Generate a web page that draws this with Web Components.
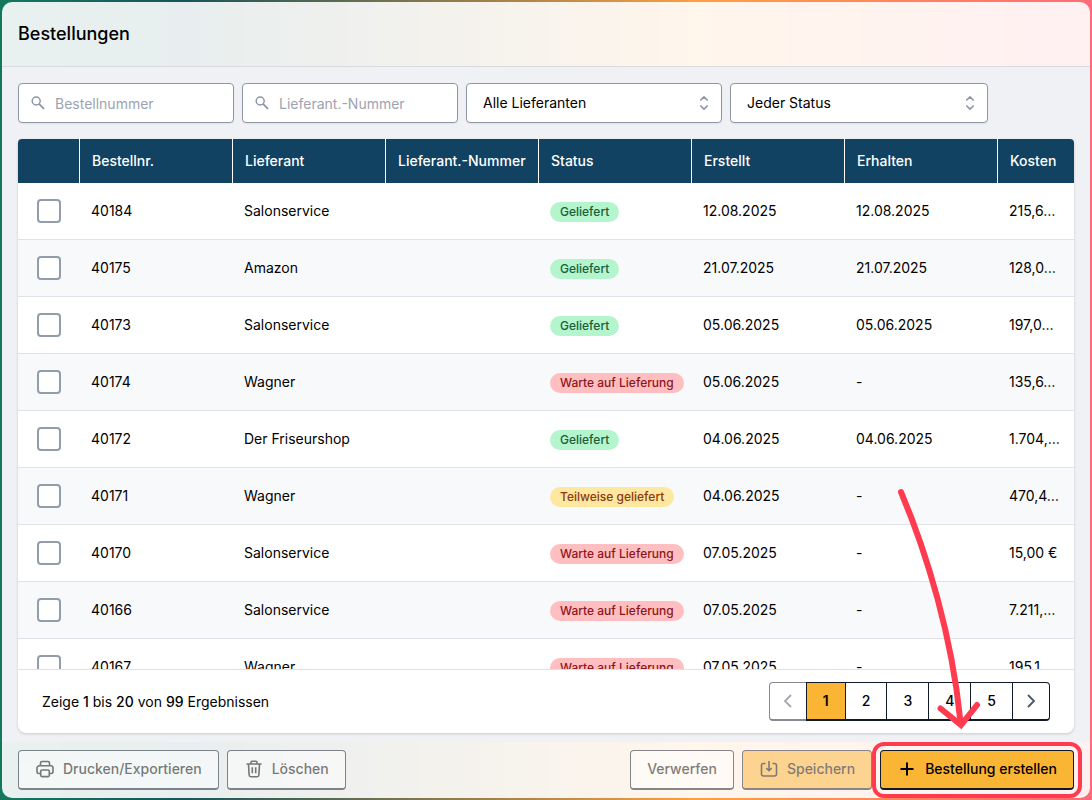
<!DOCTYPE html>
<html lang="de">
<head>
<meta charset="utf-8">
<meta name="viewport" content="width=device-width, initial-scale=1">
<title>Bestellungen</title>
<style>
  body {
    margin: 0;
    font-family: Inter, "Liberation Sans", sans-serif;
    font-size: 14px;
    line-height: 20px;
    color: #000;
    background: linear-gradient(to right, #14785f 0%, #17555a 17%, #ff9f40 64%, #ff6b78 100%);
  }
</style>
</head>
<body>
<app-shell>
  <h1 slot="title">Bestellungen</h1>
  <search-field slot="filters" label="Bestellnummer"></search-field>
  <search-field slot="filters" label="Lieferant.-Nummer"></search-field>
  <select-field slot="filters" label="Lieferant" options="Alle Lieferanten|Amazon|Der Friseurshop|Salonservice|Wagner"></select-field>
  <select-field slot="filters" label="Status" wide options="Jeder Status|Geliefert|Teilweise geliefert|Warte auf Lieferung"></select-field>
  <orders-table></orders-table>
  <result-pagination></result-pagination>
  <app-button slot="left" icon="print" disabled>Drucken/Exportieren</app-button>
  <app-button slot="left" icon="trash" disabled>Löschen</app-button>
  <app-button slot="right" disabled>Verwerfen</app-button>
  <app-button slot="right" icon="save" primary disabled>Speichern</app-button>
  <tour-highlight slot="right">
    <app-button icon="plus" primary>Bestellung erstellen</app-button>
  </tour-highlight>
</app-shell>

<script>
const ICONS = {
  print: '<path d="M5.500 6.500V4a1.500 1.500 0 0 1 1.500-1.500h6A1.500 1.500 0 0 1 14.500 4v2.500M5.500 14.500H4a2 2 0 0 1-2-2V9a2.200 2.200 0 0 1 2.200-2.200h11.600A2.200 2.200 0 0 1 18 9v3.500a2 2 0 0 1-2 2h-1.500M7 11h6a1.300 1.300 0 0 1 1.300 1.300v4A1.300 1.300 0 0 1 13 17.600H7a1.300 1.300 0 0 1-1.300-1.300v-4A1.300 1.300 0 0 1 7 11z"/>',
  trash: '<path d="M2.500 5h15M7 5V3.200a1 1 0 0 1 1-1h4a1 1 0 0 1 1 1V5M4.500 5l.6 11a1.800 1.800 0 0 0 1.800 1.700h6.200a1.800 1.800 0 0 0 1.800-1.700l.6-11M8.300 8.300v6M11.700 8.300v6"/>',
  save: '<path d="M6.500 4.500h-2a2 2 0 0 0-2 2v8.500a2 2 0 0 0 2 2h11a2 2 0 0 0 2-2V6.500a2 2 0 0 0-2-2h-2M10 2v9.500M7.200 9l2.800 2.800L12.800 9"/>',
  plus: '<path d="M10 3.500v13M3.500 10h13" stroke-width="2"/>'
};

class AppShell extends HTMLElement {
  constructor() {
    super();
    this.attachShadow({ mode: 'open' });
    this.shadowRoot.innerHTML = `
      <style>
        :host {
          display: flex;
          box-sizing: border-box;
          height: 100vh;
          padding: 2px;
        }
        .panel {
          flex: 1;
          min-width: 0;
          display: flex;
          flex-direction: column;
          border-radius: 10px;
          overflow: hidden;
        }
        header {
          padding: 20px 16px;
          background: rgba(255, 255, 255, 0.9);
          border-bottom: 1px solid #d8dadd;
        }
        ::slotted(h1) {
          margin: 0;
          font-size: 18px;
          line-height: 24px;
          font-weight: 500;
        }
        main {
          flex: 1;
          min-height: 0;
          display: flex;
          flex-direction: column;
          gap: 16px;
          padding: 16px 16px 9px;
          background: #f0f1f4;
        }
        .filters {
          display: flex;
          gap: 8px;
        }
        .card {
          flex: 1;
          min-height: 0;
          display: flex;
          flex-direction: column;
          background: #fff;
          border-radius: 4px 4px 8px 8px;
          overflow: hidden;
          box-shadow: 0 1px 3px rgba(0, 0, 0, 0.16);
        }
        footer {
          display: flex;
          justify-content: space-between;
          padding: 8px 16px;
          background: rgba(255, 255, 255, 0.9);
        }
        .group {
          display: flex;
          gap: 8px;
        }
      </style>
      <div class="panel">
        <header><slot name="title"></slot></header>
        <main>
          <div class="filters"><slot name="filters"></slot></div>
          <div class="card"><slot></slot></div>
        </main>
        <footer>
          <div class="group"><slot name="left"></slot></div>
          <div class="group"><slot name="right"></slot></div>
        </footer>
      </div>
    `;
  }
}

class SearchField extends HTMLElement {
  connectedCallback() {
    const label = this.getAttribute('label');
    this.attachShadow({ mode: 'open' });
    this.shadowRoot.innerHTML = `
      <style>
        :host {
          display: block;
          width: 216px;
        }
        label {
          display: flex;
          align-items: center;
          box-sizing: border-box;
          height: 40px;
          padding: 0 12px;
          gap: 8px;
          background: #fff;
          border: 1px solid #8d97a5;
          border-radius: 4px;
          box-shadow: 0 1px 2px rgba(0, 0, 0, 0.06);
        }
        svg {
          flex: none;
          color: #8d97a5;
        }
        input {
          flex: 1;
          min-width: 0;
          padding: 2px 0 0;
          border: 0;
          outline: 0;
          background: none;
          font: inherit;
        }
        input::placeholder {
          color: #9ca3af;
          opacity: 1;
        }
      </style>
      <label>
        <svg width="16" height="16" viewBox="0 0 16 16" fill="none" stroke="currentColor">
          <circle cx="5.200" cy="6" r="4" stroke-width="1.500"/>
          <path d="M8 8.800l5 5" stroke-width="1.900"/>
        </svg>
        <input type="text" placeholder="${label}" aria-label="${label}">
      </label>
    `;
  }
}

class SelectField extends HTMLElement {
  connectedCallback() {
    const options = this.getAttribute('options').split('|');
    this.attachShadow({ mode: 'open' });
    this.shadowRoot.innerHTML = `
      <style>
        :host {
          display: grid;
          width: 256px;
        }
        :host([wide]) {
          width: 258px;
        }
        select, svg {
          grid-area: 1 / 1;
        }
        select {
          appearance: none;
          height: 40px;
          padding: 0 40px 0 16px;
          background: #fff;
          border: 1px solid #8d97a5;
          border-radius: 4px;
          box-shadow: 0 1px 2px rgba(0, 0, 0, 0.06);
          font: inherit;
          color: inherit;
        }
        svg {
          place-self: center end;
          margin-right: 8px;
          color: #8d97a5;
          pointer-events: none;
        }
      </style>
      <select aria-label="${this.getAttribute('label')}">
        ${options.map(o => `<option>${o}</option>`).join('')}
      </select>
      <svg width="20" height="20" viewBox="0 0 20 20" fill="none" stroke="currentColor" stroke-width="1.700" stroke-linecap="round" stroke-linejoin="round">
        <path d="M6.800 7L10 3.900 13.200 7M6.800 13l3.200 3.100L13.200 13"/>
      </svg>
    `;
  }
}

class StatusBadge extends HTMLElement {
  constructor() {
    super();
    this.attachShadow({ mode: 'open' });
    this.shadowRoot.innerHTML = `
      <style>
        :host {
          display: inline-block;
          margin-top: 2px;
          padding: 2px 10px;
          border-radius: 10px;
          font-size: 12px;
          line-height: 16px;
          font-weight: 500;
          white-space: nowrap;
          vertical-align: middle;
          background: #b5f5cd;
          color: #17603a;
        }
        :host([type="open"]) {
          background: #ffbfc0;
          color: #8f1420;
        }
        :host([type="partial"]) {
          background: #fee79f;
          color: #8a3a10;
        }
      </style>
      <slot></slot>
    `;
  }
}

const STATUS = {
  done: 'Geliefert',
  open: 'Warte auf Lieferung',
  partial: 'Teilweise geliefert'
};

const ORDERS = [
  ['40184', 'Salonservice', '', 'done', '12.08.2025', '12.08.2025', '215,6…'],
  ['40175', 'Amazon', '', 'done', '21.07.2025', '21.07.2025', '128,0…'],
  ['40173', 'Salonservice', '', 'done', '05.06.2025', '05.06.2025', '197,0…'],
  ['40174', 'Wagner', '', 'open', '05.06.2025', '-', '135,6…'],
  ['40172', 'Der Friseurshop', '', 'done', '04.06.2025', '04.06.2025', '1.704,…'],
  ['40171', 'Wagner', '', 'partial', '04.06.2025', '-', '470,4…'],
  ['40170', 'Salonservice', '', 'open', '07.05.2025', '-', '15,00 €'],
  ['40166', 'Salonservice', '', 'open', '07.05.2025', '-', '7.211,…'],
  ['40167', 'Wagner', '', 'open', '07.05.2025', '-', '195,1…']
];

class OrdersTable extends HTMLElement {
  constructor() {
    super();
    this.attachShadow({ mode: 'open' });
    const heads = ['Bestellnr.', 'Lieferant', 'Lieferant.-Nummer', 'Status', 'Erstellt', 'Erhalten', 'Kosten'];
    const rows = ORDERS.map(order => `
      <tr>
        <td class="check"><input type="checkbox" aria-label="Bestellung ${order[0]} auswählen"></td>
        ${order.map((v, i) => i === 3
          ? `<td><status-badge type="${v}">${STATUS[v]}</status-badge></td>`
          : `<td>${v}</td>`).join('')}
      </tr>`).join('');
    this.shadowRoot.innerHTML = `
      <style>
        :host {
          display: block;
          flex: 1;
          min-height: 0;
          overflow: auto;
          scrollbar-width: none;
        }
        table {
          width: 100%;
          table-layout: fixed;
          border-collapse: separate;
          border-spacing: 0;
        }
        col {
          width: 153px;
        }
        col.check {
          width: 62px;
        }
        col.cost {
          width: auto;
        }
        th {
          position: sticky;
          top: 0;
          z-index: 1;
          padding: 12px;
          background: #114262;
          color: #fff;
          font-weight: 500;
          text-align: left;
          white-space: nowrap;
          border-right: 1px solid #fff;
        }
        th:last-child {
          border-right: 0;
        }
        td {
          height: 56px;
          padding: 0 11px;
          border-bottom: 1px solid #dfe2e8;
          white-space: nowrap;
        }
        tr:nth-child(even) td {
          background: #f8f9fb;
        }
        td.check {
          text-align: center;
        }
        input {
          appearance: none;
          display: block;
          box-sizing: border-box;
          width: 24px;
          height: 24px;
          margin: 0 auto;
          border: 2px solid #929cab;
          border-radius: 4px;
          background: #fff;
        }
        input:checked {
          background: #114262;
        }
      </style>
      <table>
        <colgroup>
          <col class="check"><col><col><col><col><col><col><col class="cost">
        </colgroup>
        <thead><tr><th></th>${heads.map(h => `<th scope="col">${h}</th>`).join('')}</tr></thead>
        <tbody>${rows}</tbody>
      </table>
    `;
  }
}

class ResultPagination extends HTMLElement {
  constructor() {
    super();
    this.attachShadow({ mode: 'open' });
    this.shadowRoot.innerHTML = `
      <style>
        :host {
          display: flex;
          align-items: center;
          justify-content: space-between;
          padding: 12px 24px;
          border-top: 1px solid #dfe1e4;
        }
        p {
          margin: 0;
        }
        b {
          font-weight: 500;
        }
        nav {
          display: flex;
        }
        button {
          box-sizing: border-box;
          height: 39px;
          margin: 0 0 0 -1px;
          padding: 0 16px;
          background: #fff;
          border: 1px solid #111827;
          border-bottom-width: 2px;
          font: inherit;
          font-weight: 500;
          color: #000;
        }
        .step {
          display: flex;
          align-items: center;
          padding: 0 8px;
          color: #4b5563;
        }
        .step:first-child {
          margin: 0;
          border-radius: 4px 0 0 4px;
          opacity: 0.5;
        }
        .step:last-child {
          border-radius: 0 4px 4px 0;
        }
        [aria-current] {
          position: relative;
          background: #fbb534;
          font-weight: 600;
        }
      </style>
      <p>Zeige <b>1</b> bis <b>20</b> von <b>99</b> Ergebnissen</p>
      <nav aria-label="Seiten">
        <button class="step" disabled aria-label="Zurück">
          <svg width="20" height="20" viewBox="0 0 20 20" fill="none" stroke="currentColor" stroke-width="1.800"><path d="M13 4l-6 6 6 6"/></svg>
        </button>
        <button aria-current="page">1</button>
        <button>2</button>
        <button>3</button>
        <button>4</button>
        <button>5</button>
        <button class="step" aria-label="Weiter">
          <svg width="20" height="20" viewBox="0 0 20 20" fill="none" stroke="currentColor" stroke-width="1.800"><path d="M7 4l6 6-6 6"/></svg>
        </button>
      </nav>
    `;
  }
}

class AppButton extends HTMLElement {
  connectedCallback() {
    const icon = ICONS[this.getAttribute('icon')];
    this.attachShadow({ mode: 'open' });
    this.shadowRoot.innerHTML = `
      <style>
        :host {
          display: block;
        }
        button {
          display: flex;
          align-items: center;
          gap: 8px;
          box-sizing: border-box;
          height: 40px;
          padding: 0 16px 1px;
          background: #fff;
          border: 1px solid #111827;
          border-bottom-width: 2px;
          border-radius: 4px;
          font: inherit;
          font-weight: 500;
          color: #000;
          white-space: nowrap;
        }
        :host([primary]) button {
          background: #fbb534;
        }
        button:disabled {
          opacity: 0.5;
        }
      </style>
      <button ${this.hasAttribute('disabled') ? 'disabled' : ''}>
        ${icon ? `<svg width="20" height="20" viewBox="0 0 20 20" fill="none" stroke="currentColor" stroke-width="1.600" stroke-linejoin="round">${icon}</svg>` : ''}
        <slot></slot>
      </button>
    `;
  }
}

// red frame around the slotted control, with an arrow pointing down at it
class TourHighlight extends HTMLElement {
  constructor() {
    super();
    this.attachShadow({ mode: 'open' });
    this.shadowRoot.innerHTML = `
      <style>
        :host {
          display: block;
          position: relative;
        }
        .ring {
          position: absolute;
          inset: -8px;
          border: 4px solid #ff3b50;
          border-radius: 12px;
          pointer-events: none;
        }
        svg {
          position: absolute;
          left: 0;
          bottom: 100%;
          z-index: 2;
          pointer-events: none;
        }
      </style>
      <slot></slot>
      <div class="ring"></div>
      <svg width="194" height="270" viewBox="0 0 194 270" fill="none" stroke="#ff3b50" stroke-linecap="round">
        <path d="M21 12C48 76 72 158 80 238" stroke-width="6"/>
        <path d="M60.500 228.500L81 245 97 225" stroke-width="6"/>
      </svg>
    `;
  }
}

customElements.define('app-shell', AppShell);
customElements.define('search-field', SearchField);
customElements.define('select-field', SelectField);
customElements.define('status-badge', StatusBadge);
customElements.define('orders-table', OrdersTable);
customElements.define('result-pagination', ResultPagination);
customElements.define('app-button', AppButton);
customElements.define('tour-highlight', TourHighlight);
</script>
</body>
</html>
